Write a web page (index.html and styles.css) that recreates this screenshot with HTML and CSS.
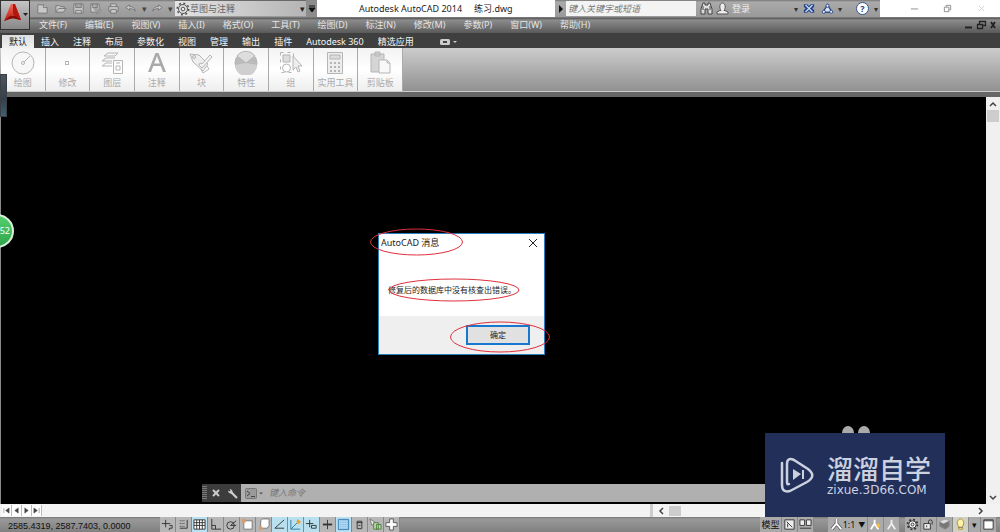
FILE: index.html
```html
<!DOCTYPE html>
<html lang="zh-CN">
<head>
<meta charset="utf-8">
<title>Autodesk AutoCAD 2014 练习.dwg</title>
<link rel="stylesheet" href="styles.css">
</head>
<body>
<div class="app">
  <header class="header">
    <button class="app-button" aria-label="应用程序菜单">
      <svg width="28" height="28" viewBox="0 0 28 28"><defs><linearGradient id="red" x1="0" y1="0" x2="0" y2="1"><stop offset="0" stop-color="#ee6a58"/><stop offset="1" stop-color="#c01a10"/></linearGradient></defs><path d="M10 3h4l6 16-4-1-4-4-4 4-5 2z" fill="url(#red)"/><path d="M12 3h2l6 16-4-1-4-5z" fill="#b5160d"/><path d="M3 20l6-5q3-1 6 0l5 4-5-1q-3-1-6 0z" fill="#8c0d08"/><path d="M22 12h5l-2.500 3z" fill="#222"/></svg>
    </button>
    <div class="title-row">
      <div class="quick-tools">
        <button aria-label="新建"><svg viewBox="0 0 14 14"><path d="M2 3h6l4 3v6H2z"/><path d="M8 3v3h4"/></svg></button>
        <button aria-label="打开"><svg viewBox="0 0 14 14"><path d="M2 11V4h4l1 1h4v2M2 11l3-4h8l-3 4z"/></svg></button>
        <button aria-label="保存"><svg viewBox="0 0 14 14"><path d="M2 2h10v10H2zM4 2v4h6V2M4 12V9h6v3"/></svg></button>
        <button aria-label="另存为"><svg viewBox="0 0 14 14"><path d="M2 2h9v6M7 11H2V2M4 2v4h5V2M8 12l4-4 1 1-4 4z"/></svg></button>
        <button aria-label="打印"><svg viewBox="0 0 14 14"><path d="M4 5V2h6v3M4 10H2V5h10v5h-2M4 8h6v4H4z"/></svg></button>
        <button aria-label="放弃"><svg viewBox="0 0 14 14"><path d="M6 3L2 6l4 3V7c3 0 5 1 6 3 0-4-3-5-6-5z"/></svg></button>
        <button class="narrow" aria-label="放弃列表">▾</button>
        <button aria-label="重做"><svg viewBox="0 0 14 14"><path d="M8 3l4 3-4 3V7c-3 0-5 1-6 3 0-4 3-5 6-5z"/></svg></button>
        <button class="narrow" aria-label="重做列表">▾</button>
      </div>
      <div class="workspace">
        <svg width="14" height="14" viewBox="0 0 14 14"><circle cx="7" cy="7" r="4.500" fill="#ddd" stroke="#555"/><circle cx="7" cy="7" r="5.800" fill="none" stroke="#555" stroke-width="1.500" stroke-dasharray="2 2.500"/><circle cx="7" cy="7" r="1.800" fill="#eee" stroke="#555"/></svg>
        <select aria-label="工作空间"><option>草图与注释</option></select>
        <span class="arrow">▾</span>
      </div>
      <button class="customize" aria-label="自定义快速访问工具栏"><svg width="8" height="8" viewBox="0 0 8 8"><path d="M1 1h6M1 3h6L4 7z" fill="#111" stroke="#111"/></svg></button>
      <h1 class="title"><span>Autodesk AutoCAD 2014</span><span>练习.dwg</span></h1>
      <div class="info">
        <button class="expand" aria-label="展开搜索"><svg width="6" height="8" viewBox="0 0 6 8"><path d="M1 0l4 4-4 4z" fill="#111"/></svg></button>
        <input class="search" type="text" placeholder="键入关键字或短语" aria-label="搜索">
        <button class="binoculars" aria-label="查找"><svg width="13" height="13" viewBox="0 0 13 13"><path d="M3 1h2v2h3V1h2l2 6v5H8V7H5v5H1V7z" fill="#ddd" stroke="#444"/><path d="M3 4v4M10 4v4" stroke="#444"/></svg></button>
        <button class="login"><svg width="13" height="13" viewBox="0 0 13 13"><path d="M1 12V10l3-1.500h1C3 6 3.500 1 6.500 1S10 6 8 8.500h1l3 1.500v2z" fill="#ececec" stroke="#555"/></svg>登录</button>
        <span class="gap"></span>
        <span class="mini">▾</span>
        <button class="exchange" aria-label="Exchange"><svg width="12" height="11" viewBox="0 0 14 12"><path d="M1 1h4l2 2 2-2h4v3l-2 2 2 2v3H9L7 9l-2 2H1V8l2-2-2-2z" fill="#24458c"/><path d="M3 2l8 8M11 2l-8 8" stroke="#c9d8f5" stroke-width="1.500"/></svg></button>
        <button class="a360" aria-label="Autodesk 360"><svg width="13" height="12" viewBox="0 0 14 13"><path d="M7 2l5 8H2z" fill="#dce5f3" stroke="#304c86" stroke-width="1.500"/><g fill="#e4ebf6" stroke="#304c86"><circle cx="7" cy="3" r="1.700"/><circle cx="3" cy="9.500" r="1.700"/><circle cx="11" cy="9.500" r="1.700"/></g></svg></button>
        <span class="mini">▾</span>
        <button class="help" aria-label="帮助">?</button>
        <span class="mini">▾</span>
      </div>
      <div class="window-buttons">
        <button aria-label="最小化"><svg viewBox="0 0 10 10"><path d="M1 5.500h8"/></svg></button>
        <button aria-label="还原"><svg viewBox="0 0 10 10"><path d="M1.500 3.500h5v5h-5zM3.500 3V1.500h5v5H7"/></svg></button>
        <button class="faint" aria-label="关闭"><svg viewBox="0 0 10 10"><path d="M2 2l6 6M8 2L2 8"/></svg></button>
      </div>
    </div>
    <nav class="menu-row">
      <button>文件(F)</button><button>编辑(E)</button><button>视图(V)</button><button>插入(I)</button><button>格式(O)</button><button>工具(T)</button><button>绘图(D)</button><button>标注(N)</button><button>修改(M)</button><button>参数(P)</button><button>窗口(W)</button><button>帮助(H)</button>
      <div class="doc-buttons">
        <svg width="32" height="10" viewBox="0 0 32 10"><g fill="none" stroke="#222"><path d="M0 7.500h7" stroke-width="2"/><path d="M12.500 4.500h5v4h-5zM14.500 4V1.500h6v4H18" stroke-width="1.300"/><path d="M26 2l4 6M30 2l-4 6" stroke-width="1.800"/></g></svg>
      </div>
    </nav>
  </header>

  <nav class="tabs">
    <button class="active">默认</button><button>插入</button><button>注释</button><button>布局</button><button>参数化</button><button>视图</button><button>管理</button><button>输出</button><button>插件</button><button>Autodesk 360</button><button>精选应用</button>
    <button class="toggle" aria-label="最小化功能区"><svg width="18" height="8" viewBox="0 0 18 8"><rect x="0" y="1" width="10" height="6" rx="1.500" fill="#ccc"/><rect x="3" y="3" width="4" height="2" fill="#444"/><path d="M13 3h4l-2 2z" fill="#ccc"/></svg></button>
  </nav>

  <section class="ribbon">
    <div class="panels">
      <button><svg viewBox="0 0 24 24"><circle cx="12" cy="12" r="11" fill="#f7f7f7"/><circle cx="12" cy="12" r="1.500"/><path d="M13 11l6-6"/></svg>绘图</button>
      <button><svg viewBox="0 0 24 24"><rect x="10.500" y="10.500" width="3" height="3"/></svg>修改</button>
      <button><svg viewBox="0 0 24 24"><path d="M4 5l4-3h10l-3 3zM2 10l4-3h9M2 10h10M2 15l4-3h6M2 15h10"/><path d="M13.500 9.500h9v13h-9zM16 12h4M16 15h4v4h-4z"/></svg>图层</button>
      <button><svg viewBox="0 0 24 24"><path d="M3 21L10.500 2h3L21 21h-3l-2.300-6H8.300L6 21zm6.200-8.500h5.600L12 5z" fill="#aaa" stroke="none"/></svg>注释</button>
      <button><svg viewBox="0 0 24 24"><path d="M1 3l9 1 9 9-5 7L4 11z" fill="#eee"/><circle cx="5" cy="6" r="1.500"/><path d="M10 14l3 3L23 6l-2-2-8 9-2-1z" fill="#f4f4f4"/><path d="M12 18l2 4 6-4-2-3"/></svg>块</button>
      <button><svg viewBox="0 0 24 24"><circle cx="12" cy="12" r="11" fill="#bbb"/><path d="M12 12L3 5a11 11 0 0 1 18 0z" fill="#ddd"/><path d="M12 12L1 14a11 11 0 0 0 22 0z" fill="#cfcfcf" stroke="none"/></svg>特性</button>
      <button><svg viewBox="0 0 24 24"><path d="M1.500 1.500h13v20h-13z" stroke-dasharray="3 4"/><path d="M4 4h7v7H4z" fill="#ddd"/><circle cx="7.500" cy="17" r="4"/><path d="M14 5v14l3-3 2 5 2-1-2-5h4z" fill="#eee"/></svg>组</button>
      <button><svg viewBox="0 0 24 24"><path d="M4.500 1.500h15v21h-15z" fill="#eee"/><path d="M7 4h10v4H7z" fill="#ddd"/><path d="M7 12h10M7 16h10M7 20h10" stroke-width="2" stroke-dasharray="2 2"/></svg>实用工具</button>
      <button><svg viewBox="0 0 24 24"><path d="M3 3h13v18H3zM7 1h5v4H7z" fill="#d5d5d5"/><path d="M11 9h8l3 3v10H11zM19 9v3h3" fill="#f8f8f8"/></svg>剪贴板</button>
    </div>
  </section>

  <main class="workarea">
    <div class="canvas">
      <section class="dialog" role="dialog" aria-labelledby="dialog-title">
        <div class="dialog-head">
          <h2 id="dialog-title">AutoCAD 消息</h2>
          <button aria-label="关闭"><svg width="10" height="10" viewBox="0 0 10 10"><path d="M1 1l8 8M9 1L1 9" stroke="#222"/></svg></button>
        </div>
        <p>修复后的数据库中没有核查出错误。</p>
        <div class="dialog-foot"><button>确定</button></div>
      </section>
      <svg class="marks" width="190" height="130" viewBox="0 0 190 130"><g fill="none" stroke="#e0303c"><ellipse cx="51.500" cy="14" rx="46" ry="13"/><ellipse cx="89" cy="62" rx="65" ry="11"/><ellipse cx="135" cy="109" rx="49.500" ry="15"/></g></svg>
      <div class="command">
        <span class="grip"></span>
        <button aria-label="关闭命令行"><svg width="8" height="8" viewBox="0 0 8 8"><path d="M1 1l6 6M7 1L1 7" stroke="#ccc" stroke-width="2"/></svg></button>
        <button aria-label="自定义"><svg width="11" height="11" viewBox="0 0 11 11"><path d="M4 4l6 6" stroke="#ccc" stroke-width="2.200"/><path d="M3 1L1 3l1 2 3 1 1-1-1-3z" fill="#ccc"/><path d="M1 1l2 2" stroke="#333" stroke-width="1.500"/></svg></button>
        <label class="prompt"><svg width="18" height="11" viewBox="0 0 18 11"><rect x=".5" y=".5" width="11" height="10" rx="1" fill="#9a9a9a" stroke="#777"/><path d="M2 3l3 2.500L2 8M6 8.500h4" stroke="#444" fill="none"/><path d="M14 4.500h4l-2 2z" fill="#555"/></svg><input type="text" placeholder="键入命令" aria-label="命令"></label>
      </div>
      <span class="ghosts"><i></i><i></i></span>
    </div>
    <div class="vscroll">
      <svg width="8" height="6" viewBox="0 0 8 6"><path d="M1 5l3-3 3 3" /></svg>
      <span class="thumb"></span>
      <svg class="down" width="8" height="6" viewBox="0 0 8 6"><path d="M1 1l3 3 3-3"/></svg>
    </div>
    <button class="side-tab" aria-label="侧边栏"></button>
    <span class="bubble">52</span>
    <aside class="watermark">
      <svg width="36" height="38" viewBox="0 0 36 38"><g fill="none" stroke="#ccd1e0" stroke-width="2.500" stroke-linecap="round" stroke-linejoin="round"><path d="M3 7v22q0 8 8 6l17-9q10-6 1-13L15 4Q8 1 8 8v18q0 3 2 2"/></g><path d="M14 13l8 5-8 6z" fill="#ccd1e0"/><path d="M24 14v9" stroke="#ccd1e0" stroke-width="2"/></svg>
      <div><strong>溜溜自学</strong><span>zixue.3D66.COM</span></div>
    </aside>
  </main>

  <div class="layout-row">
    <div class="nav-buttons">
      <button aria-label="首个"><svg viewBox="0 0 8 8"><path d="M1 1v6" /><path d="M7 1v6L3 4z"/></svg></button>
      <button aria-label="上一个"><svg viewBox="0 0 8 8"><path d="M6 1v6L2 4z"/></svg></button>
      <button aria-label="下一个"><svg viewBox="0 0 8 8"><path d="M2 1v6l4-3z"/></svg></button>
      <button aria-label="末个"><svg viewBox="0 0 8 8"><path d="M1 1v6l4-3z"/><path d="M7 1v6"/></svg></button>
    </div>
    <div class="hscroll">
      <svg width="6" height="8" viewBox="0 0 6 8"><path d="M5 1L2 4l3 3"/></svg>
      <span class="thumb"></span>
      <svg class="right" width="6" height="8" viewBox="0 0 6 8"><path d="M1 1l3 3-3 3"/></svg>
    </div>
  </div>

  <footer class="status">
    <output class="coords">2585.4319, 2587.7403, 0.0000</output>
    <div class="toggles">
      <button aria-label="推断约束"><svg viewBox="0 0 14 14"><path d="M1 6h9M5 2v8M9 8h3v3H9v2"/></svg></button>
      <button aria-label="捕捉"><svg viewBox="0 0 14 14"><path d="M3 3h6M3 6h6M3 9h6" stroke-dasharray="1 1"/><path d="M11 2v9H3"/></svg></button>
      <button class="on" aria-label="栅格"><svg viewBox="0 0 14 14"><path d="M1 2h12v10H1z" fill="#fff"/><path d="M1 5h12M1 8h12M4 2v10M7 2v10M10 2v10"/></svg></button>
      <button aria-label="正交"><svg viewBox="0 0 14 14"><path d="M3 1v11h10M3 8h4v4"/></svg></button>
      <button aria-label="极轴"><svg viewBox="0 0 14 14"><circle cx="6" cy="8" r="4"/><path d="M6 8l6-5M6 8h6"/></svg></button>
      <button aria-label="对象捕捉"><svg viewBox="0 0 14 14"><path d="M3 3h9v9H3z" fill="#fff" stroke="#777"/><path d="M1 1h4v4H1z" fill="#d99a6c" stroke="none"/></svg></button>
      <button aria-label="三维对象捕捉"><svg viewBox="0 0 14 14"><path d="M4 3l2-2h7v7l-2 3H4z" fill="#fff" stroke="#777"/><circle cx="4" cy="11" r="2" fill="#d99a6c" stroke="none"/></svg></button>
      <button class="on" aria-label="对象追踪"><svg viewBox="0 0 14 14"><path d="M12 2L2 11h10"/></svg></button>
      <button class="on" aria-label="动态 UCS"><svg viewBox="0 0 14 14"><path d="M2 2v10h10M2 12l7-7" stroke="#287ba8"/><path d="M9 1l4 3-3 3-2-3z" fill="#e5a33b" stroke="none"/></svg></button>
      <button class="on" aria-label="动态输入"><svg viewBox="0 0 14 14"><path d="M1 6h8M5 2v8M7 8h5v3H7z"/></svg></button>
      <button aria-label="线宽"><svg viewBox="0 0 14 14"><path d="M2 7h10" stroke-width="2"/><path d="M7 2v10"/></svg></button>
      <button class="on" aria-label="透明度"><svg viewBox="0 0 14 14"><path d="M1.500 1.500h11v11h-11z" fill="#b5dcf5" stroke="#3978ae"/><path d="M3 3h9M3 5h9M3 7h9M3 9h9M3 11h9" stroke="#6aabdc" stroke-dasharray="1 1"/></svg></button>
      <button aria-label="快捷特性"><svg viewBox="0 0 14 14"><path d="M4.500 3.500h5v8h-5zM4 5h6M6 8h2"/></svg></button>
      <button aria-label="选择循环"><svg viewBox="0 0 14 14"><path d="M1 1l6 4-4 3z" fill="#eee" stroke="#777"/><path d="M5 5h5v7H5zM8 7h5v5H8z" fill="#b8dba6" stroke="#4d7f41"/></svg></button>
      <button aria-label="注释监视器"><svg viewBox="0 0 14 14"><path d="M5 1h4v4h4v4H9v4H5V9H1V5h4z" fill="#fff" stroke="#555"/></svg></button>
    </div>
    <div class="status-right">
      <button class="model">模型</button>
      <button aria-label="快速查看布局"><svg viewBox="0 0 14 14"><path d="M2 2h10v10H2z" fill="#eee"/><path d="M4 4l6 6M5 10V6"/></svg></button>
      <button aria-label="快速查看图形"><svg viewBox="0 0 14 14"><path d="M1 2h5v6H1zM8 2h5v6H8zM1 11h12" fill="#eee"/></svg></button>
      <button class="scale"><svg viewBox="0 0 14 14"><path d="M7 1v5l-5 6M7 6l5 6" stroke="#555" stroke-width="3.500"/><path d="M7 1v5l-5 6M7 6l5 6" stroke="#fff" stroke-width="2"/></svg>1:1<small>▼</small></button>
      <button aria-label="注释可见性"><svg viewBox="0 0 14 14"><path d="M6 2v4l-4 6M6 6l4 6" stroke="#fff" stroke-width="2"/><path d="M10 5l2 3-2 3-2-3z" fill="#f5bd3e" stroke="none"/></svg></button>
      <button aria-label="自动缩放"><svg viewBox="0 0 14 14"><path d="M7 2v4l-4 6M7 6l4 6" stroke="#eee" stroke-width="2"/></svg></button>
      <button class="spaced" aria-label="切换工作空间"><svg viewBox="0 0 14 14"><circle cx="7" cy="7" r="5.300" stroke-width="2" stroke-dasharray="2 2.160"/><circle cx="7" cy="7" r="4" fill="#eee"/><circle cx="7" cy="7" r="1.500"/></svg></button>
      <button aria-label="锁定"><svg viewBox="0 0 14 14"><path d="M2 6h7v6H2z" fill="#eee"/><path d="M7 6V4q0-2 2-2t2 2v3M5 8v2"/></svg></button>
      <button aria-label="硬件加速"><svg viewBox="0 0 14 14"><path d="M2 4l4 2 6-3v6l-4 3-6-3z" fill="#777" stroke="#888"/><path d="M6 6l6-3-5-1-5 2z" fill="#ddd" stroke="none"/></svg></button>
      <button class="lit" aria-label="隔离对象"><svg viewBox="0 0 14 14"><path d="M5 9C2 6 4 1 7 1s5 5 2 8v3H5z" fill="#fff2a8" stroke="#a58b32"/><path d="M5 10h4" stroke="#666"/></svg></button>
      <button class="tiny" aria-label="状态栏菜单">▾</button>
      <button aria-label="全屏显示"><svg viewBox="0 0 14 14"><path d="M2 2h10v10H2z" fill="#fff"/><path d="M2 3h10"/></svg></button>
    </div>
  </footer>
</div>
</body>
</html>
```

FILE: styles.css
```css
* { box-sizing: border-box; }
body { margin: 0; font: 9px/12px "Noto Sans", "Noto Sans CJK SC", sans-serif; color: #222; }
button, input, select { margin: 0; padding: 0; border: 0; background: none; font: inherit; color: inherit; }
button { display: flex; align-items: center; justify-content: center; white-space: nowrap; }
svg { flex: none; display: block; }
.app { display: flex; flex-direction: column; height: 100vh; overflow: hidden; background: #f0f0f0; }

.header { display: grid; grid-template-columns: 30px minmax(0, 1fr); grid-template-rows: 17px 16px; flex: none; background: linear-gradient(#555 0, #a2a2a2 2px, #999 17px, #555 18px, #8c8c8c 20px, #5a5a5a 33px); }
.app-button { grid-row: 1 / 3; height: 30px; border: 1px solid #333; background: linear-gradient(#c5c5c5, #888); }
.title-row { display: grid; grid-template-columns: 145px 131px 11px minmax(0, 238fr) minmax(0, 325fr) minmax(0, 120fr); }
.quick-tools { display: flex; align-items: center; padding-left: 4px; background: linear-gradient(#777, #aaa 2px, #999); }
.quick-tools button { width: 18px; color: #444; }
.quick-tools .narrow { width: 9px; }
.quick-tools svg { width: 13px; height: 13px; fill: #c8c8c8; stroke: #777; }
.workspace { display: flex; align-items: center; margin: 1px 0; padding: 0 1px; background: linear-gradient(90deg, #e4e4e4, #b4b4b4); color: #555; }
.workspace select { flex: 1; appearance: none; color: #666; }
.workspace .arrow { color: #222; }
.customize { background: #8c8c8c; }
.title { display: flex; align-items: center; gap: 12px; margin: 0; padding-left: 42px; background: #fff; color: #222; font-size: 9px; font-weight: 400; white-space: nowrap; }
.info { display: flex; align-items: center; background: linear-gradient(#777, #aaa 2px, #999); color: #333; }
.expand { width: 11px; height: 17px; }
.search { width: 130px; height: 15px; padding-left: 2px; background: #f3f3f3; }
.search::placeholder, .prompt input::placeholder { color: #777; font-style: italic; opacity: 1; }
.binoculars { width: 20px; }
.login { gap: 3px; color: #eee; }
.gap { flex: 1; }
.mini { width: 8px; text-align: center; font-size: 8px; }
.exchange, .a360 { width: 18px; }
.help { width: 13px; height: 13px; margin: 0 3px 0 12px; border: 1px solid #35548c; border-radius: 50%; background: #fff; color: #1c3f85; font-weight: 700; }
.window-buttons { display: flex; justify-content: space-around; padding: 0 2px 0 18px; background: #fff; }
.window-buttons svg { width: 9px; height: 9px; fill: none; stroke: #888; }
.window-buttons .faint { opacity: .4; }
.menu-row { display: flex; align-items: center; gap: 18px; padding-left: 9px; color: #e4e4e4; white-space: nowrap; }
.doc-buttons { margin-left: auto; padding-right: 3px; }

.tabs { display: flex; flex: none; height: 15px; padding: 2px 0 0 2px; background: #3f3f3f; color: #f4f4f4; white-space: nowrap; }
.tabs button { padding: 0 7px; }
.tabs .active { background: linear-gradient(#dedede, #f1f1f1); color: #222; }
.tabs .toggle { margin-left: 12px; }

.ribbon { flex: none; height: 49px; padding-left: 1px; border-bottom: 5px solid #666; background: linear-gradient(#ccc, #909090); box-shadow: inset 0 -1px #ccc; }
.panels { display: grid; grid-template-columns: repeat(9, 1fr); width: 402px; height: 43px; }
.panels button { flex-direction: column; justify-content: flex-start; gap: 2px; padding-top: 3px; border-right: 1px solid #aaa; background: linear-gradient(#f3f3f3, #fff 50%, #eee); color: #aaa; }
.panels svg { width: 24px; height: 24px; fill: none; stroke: #b5b5b5; }

.workarea { position: relative; display: flex; flex: 1; min-height: 0; background: #000; border-left: 1px solid #888; }
.canvas { position: relative; flex: 1; overflow: hidden; }
.dialog { position: absolute; left: 377px; top: 136px; width: 167px; border: 1px solid #2a7fc0; background: #fff; color: #222; }
.dialog-head { display: flex; align-items: center; justify-content: space-between; height: 17px; padding: 0 6px 0 2px; }
.dialog-head h2 { margin: 0; font-size: 9px; font-weight: 400; }
.dialog p { margin: 0; padding: 33px 0 20px 9px; white-space: nowrap; font-size: 8px; }
.dialog-foot { display: flex; justify-content: flex-end; height: 38px; padding: 9px 14px; background: #efefef; }
.dialog-foot button { width: 64px; height: 20px; border: 2px solid #1878d0; background: #e1e1e1; font-size: 8px; }
.marks { position: absolute; left: 364px; top: 131px; }
.command { position: absolute; left: 201px; right: 160px; bottom: 2px; display: flex; align-items: center; height: 18px; background: #3c3c3c; }
.grip { width: 5px; height: 14px; background: repeating-linear-gradient(#777 0 1px, #444 1px 2px); }
.command button { width: 17px; }
.prompt { display: flex; align-items: center; gap: 6px; flex: 1; height: 18px; padding-left: 4px; background: #b0b0b0; }
.prompt input { flex: 1; }
.ghosts { position: absolute; left: 841px; top: 329px; display: flex; gap: 4px; }
.ghosts i { width: 12px; height: 14px; border-radius: 50%; background: #aaa; }
.vscroll { display: flex; flex-direction: column; align-items: center; width: 14px; padding: 4px 0 3px; background: #f0f0f0; }
.vscroll svg, .hscroll svg { fill: none; stroke: #444; stroke-width: 1.5; }
.thumb { width: 12px; height: 12px; background: #cdcdcd; }
.vscroll .thumb { margin-top: 3px; }
.vscroll .down { margin-top: auto; }
.side-tab { position: absolute; left: -1px; top: -23px; width: 7px; height: 43px; border: 1px solid #3b4047; background: linear-gradient(#4b535e, #34404c 60%, #3e6174); }
.bubble { position: absolute; left: -21px; top: 117px; width: 34px; height: 34px; padding-right: 2px; border: 2px solid #d9eedb; border-radius: 50%; background: linear-gradient(#55cf6d, #2fa64a); color: #fff; font-size: 9px; line-height: 30px; text-align: right; }
.watermark { position: absolute; right: 55px; bottom: -13px; z-index: 2; display: flex; align-items: center; gap: 12px; width: 180px; height: 84px; padding-left: 14px; background: #222f59; color: #ccd1e0; }
.watermark div { display: flex; flex-direction: column; }
.watermark strong { font-size: 26px; line-height: 30px; font-weight: 500; }
.watermark span { font: 12px/12px "DejaVu Sans", sans-serif; }

.layout-row { display: flex; flex: none; justify-content: space-between; height: 13px; background: #f3f3f3; }
.nav-buttons { display: flex; padding: 1px 0 1px 2px; }
.nav-buttons button { width: 10px; border-right: 1px solid #bbb; background: #fff; }
.nav-buttons svg { width: 7px; height: 7px; fill: #444; stroke: #444; stroke-width: .5; }
.hscroll { display: flex; align-items: center; flex: 0 0 35%; padding: 0 16px 0 5px; border-left: 3px solid #ccc; }
.hscroll .thumb { margin-left: 5px; height: 10px; }
.hscroll .right { margin-left: auto; }

.status { display: flex; flex: none; height: 15px; background: linear-gradient(#777 0, #999 2px, #808080); }
.coords { width: 160px; padding: 3px 0 0 8px; font: 9px/12px "Liberation Sans", sans-serif; color: #111; white-space: nowrap; }
.toggles { display: flex; }
.toggles button { width: 16px; border-right: 1px solid #888; background: #b7b7b7; }
.toggles .on { background: #b9e0ef; }
.toggles svg, .status-right svg { width: 13px; height: 13px; fill: none; stroke: #333; }
.status-right { display: flex; margin-left: auto; padding-right: 3px; }
.status-right button { width: 16px; border-right: 1px solid #888; background: #aaa; color: #111; }
.status-right .model { width: 22px; }
.status-right .scale { width: 40px; margin-left: 14px; }
.status-right small { margin-left: 3px; font-size: 7px; }
.status-right .spaced { margin-left: 5px; }
.status-right .lit { background: #d0d0c4; }
.status-right .tiny { width: 12px; }
```
